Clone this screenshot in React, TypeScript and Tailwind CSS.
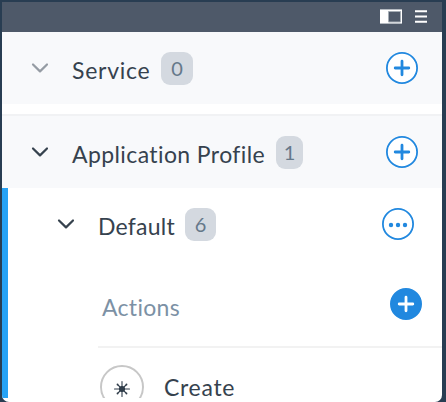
import React from "react";

function Chevron({ color }: { color: string }) {
  return (
    <svg className="shrink-0" width="18" height="12" viewBox="0 0 18 12" fill="none" stroke={color} strokeWidth="2.2" strokeLinecap="round" strokeLinejoin="round">
      <path d="M2 2.5 9 9.4 16 2.5" />
    </svg>
  );
}

function Badge({ value, className }: { value: string; className: string }) {
  return (
    <span className={`flex h-[33px] shrink-0 items-center justify-center rounded-[9px] bg-[#d4d9e0] text-[20px] leading-none text-[#65788a] ${className}`}>
      {value}
    </span>
  );
}

function RoundButton({ kind }: { kind: "plus" | "solid" | "more" }) {
  const solid = kind === "solid";
  return (
    <button className="block size-8 shrink-0">
      <svg width="32" height="32" viewBox="0 0 32 32">
        <circle cx="16" cy="16" r="15.1" fill={solid ? "#2188df" : "#fff"} stroke="#2188df" strokeWidth="1.8" />
        {kind === "more" ? (
          <g fill="#2188df">
            <circle cx="9" cy="17" r="2.2" />
            <circle cx="16" cy="17" r="2.2" />
            <circle cx="23" cy="17" r="2.2" />
          </g>
        ) : (
          <path d="M16 9.2v13.6M9.2 16h13.6" stroke={solid ? "#fff" : "#2188df"} strokeWidth="2.8" strokeLinecap="round" />
        )}
      </svg>
    </button>
  );
}

export default function App() {
  return (
    <div className="h-[402px] w-[446px] overflow-hidden bg-[#283d52] pl-[2px] pr-1 pt-[2px] font-['Lato',sans-serif] text-[#36424e] [font-variant-ligatures:none]">
      <div className="flex h-[400px] flex-col overflow-hidden rounded-b-[7px] bg-white">
        <header className="flex h-[30px] shrink-0 items-start justify-end bg-[#4e5969] pr-[15px] pt-[7px]">
          <svg width="22" height="15" viewBox="0 0 22 15">
            <path d="M0 0h22v15H0z" fill="#b4bac1" />
            <path d="M0 1h22v13H0z" fill="#fff" />
            <path d="M8.5 2.5h12v10.5h-12z" fill="#4e5969" stroke="#a5adb5" />
          </svg>
          <svg className="ml-[13px]" width="12" height="15" viewBox="0 0 12 15">
            <path d="M0 2.3h12M0 7.5h12M0 12.7h12" stroke="#fff" strokeWidth="2" />
          </svg>
        </header>
        <section className="flex h-[72px] shrink-0 items-center bg-[#f8f9fb] pl-[29px] pr-6">
          <Chevron color="#959ca4" />
          <span className="ml-[23px] w-[89px] whitespace-nowrap pt-[4px] text-[23px] leading-7 tracking-[0.75px]">Service</span>
          <Badge value="0" className="w-8" />
          <div className="ml-auto"><RoundButton kind="plus" /></div>
        </section>
        <div className="h-[10px] shrink-0" />
        <section className="flex h-[74px] shrink-0 items-center border-t-2 border-[#f1f2f4] bg-[#f8f9fb] pl-[29px] pr-6">
          <Chevron color="#36424e" />
          <span className="ml-[23px] w-[204px] whitespace-nowrap pt-[4px] text-[23px] leading-7 tracking-[0.4px]">Application Profile</span>
          <Badge value="1" className="w-[27px]" />
          <div className="ml-auto"><RoundButton kind="plus" /></div>
        </section>
        <section className="h-[210px] shrink-0 border-l-[6px] border-[#26a2f5]">
          <div className="flex h-[72px] items-center pl-[49px] pr-7">
            <Chevron color="#36424e" />
            <span className="ml-[23px] w-[87px] whitespace-nowrap pt-[4px] text-[23px] leading-7 tracking-[0.25px]">Default</span>
            <Badge value="6" className="w-[31px]" />
            <div className="ml-auto"><RoundButton kind="more" /></div>
          </div>
          <div className="ml-[90px] flex h-[88px] items-center border-b-2 border-[#f2f2f2] pl-1 pr-5">
            <span className="pt-[8px] text-[23px] leading-7 tracking-[0.3px] text-[#7c91a5]">Actions</span>
            <div className="ml-auto pt-[2px]"><RoundButton kind="solid" /></div>
          </div>
          <div className="flex h-[50px] items-start pl-[92px] pt-[17px]">
            <div className="h-[33px] w-11 shrink-0 overflow-hidden">
              <svg width="44" height="44" viewBox="0 0 44 44">
                <circle cx="22" cy="22" r="21" fill="#fff" stroke="#c7c7c7" strokeWidth="2" />
                <g stroke="#303d4a" strokeWidth="1.1" strokeLinecap="round">
                  <path d="M22 16.5v15M14.5 24h15M17.5 19.5l9 9M26.5 19.5l-9 9" />
                  <circle cx="22" cy="24" r="2.5" fill="#303d4a" />
                </g>
                <g fill="#303d4a">
                  <circle cx="17.5" cy="19.5" r="0.9" />
                  <circle cx="26.5" cy="19.5" r="0.9" />
                  <circle cx="17.5" cy="28.5" r="0.9" />
                  <circle cx="26.5" cy="28.5" r="0.9" />
                </g>
              </svg>
            </div>
            <span className="ml-5 pt-2 text-[23px] leading-7 tracking-[0.7px]">Create</span>
          </div>
        </section>
      </div>
    </div>
  );
}
